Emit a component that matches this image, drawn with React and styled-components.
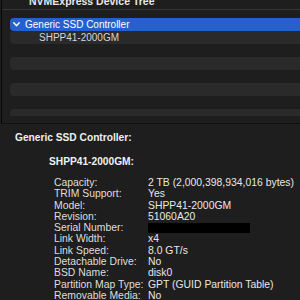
import React from "react";
import styled, { createGlobalStyle } from "styled-components";

const GlobalStyle = createGlobalStyle`
  html, body {
    margin: 0;
    padding: 0;
    background: #1e1e1e;
  }
  body {
    font-family: "Liberation Sans", Arial, sans-serif;
    -webkit-font-smoothing: antialiased;
  }
`;

const properties = [
  { label: "Capacity:", value: "2 TB (2,000,398,934,016 bytes)" },
  { label: "TRIM Support:", value: "Yes" },
  { label: "Model:", value: "SHPP41-2000GM" },
  { label: "Revision:", value: "51060A20" },
  { label: "Serial Number:", value: null },
  { label: "Link Width:", value: "x4" },
  { label: "Link Speed:", value: "8.0 GT/s" },
  { label: "Detachable Drive:", value: "No" },
  { label: "BSD Name:", value: "disk0" },
  { label: "Partition Map Type:", value: "GPT (GUID Partition Table)" },
  { label: "Removable Media:", value: "No" },
];

const Window = styled.div`
  width: 300px;
  height: 300px;
  overflow: hidden;
  background: #1e1e1e;
  display: flex;
  flex-direction: column;
`;

const TreePane = styled.div`
  height: 123px;
  margin-left: 1px;
  border-left: 1px solid #060606;
  border-bottom: 1px solid #101010;
  display: flex;
  flex-direction: column;
  flex-shrink: 0;
`;

const TitleBar = styled.div`
  height: 9px;
  overflow: hidden;
  border-bottom: 1px solid #363636;
  display: flex;
  align-items: flex-end;
  padding-left: 27px;
`;

const Title = styled.span`
  font-size: 10.5px;
  font-weight: bold;
  color: #e8e8e8;
  line-height: 13px;
  margin-bottom: 1px;
  white-space: nowrap;
`;

const RowList = styled.div`
  margin-top: 8px;
  height: 98px;
  overflow: hidden;
  display: flex;
  flex-direction: column;
  padding-left: 8px;
`;

const Row = styled.div`
  height: 13px;
  flex-shrink: 0;
  display: flex;
  align-items: center;
  gap: 5px;
  padding-left: ${({ $indent }) => $indent}px;
  border-radius: 4px 0 0 4px;
  background: ${({ $kind }) =>
    $kind === "selected" ? "#2560cf" : $kind === "stripe" ? "#2a2a2a" : "transparent"};
  color: ${({ $kind }) => ($kind === "selected" ? "#ffffff" : "#d6d6d6")};
  font-size: 10px;
  white-space: nowrap;
`;

const Chevron = () => (
  <svg width="7" height="5" viewBox="0 0 7 5">
    <path d="M0.8 0.8 L3.5 3.8 L6.2 0.8" fill="none" stroke="#ffffff" strokeWidth="1.4" strokeLinecap="round" strokeLinejoin="round" />
  </svg>
);

const DetailPane = styled.div`
  flex-shrink: 0;
  display: flex;
  flex-direction: column;
  padding: 7px 0 0 15px;
  color: #e6e6e6;
  font-size: 10.4px;
`;

const Heading = styled.div`
  font-weight: bold;
  font-size: 10.2px;
  line-height: 13px;
  height: 13px;
  color: #f0f0f0;
  margin-left: ${({ $indent }) => $indent || 0}px;
  margin-bottom: ${({ $gap }) => $gap}px;
`;

const PropList = styled.div`
  margin-left: 39px;
  display: flex;
  flex-direction: column;
  white-space: nowrap;
`;

const PropRow = styled.div`
  height: 11.3px;
  line-height: 11.3px;
  flex-shrink: 0;
  display: flex;
  align-items: center;
`;

const Label = styled.span`
  width: 94px;
  flex-shrink: 0;
  color: #dedede;
`;

const Value = styled.span`
  color: #e8e8e8;
`;

const Redacted = styled.span`
  display: block;
  width: 102px;
  height: 10px;
  background: #000;
`;

export default function App() {
  return (
    <>
      <GlobalStyle />
      <Window>
        <TreePane>
          <TitleBar>
            <Title>NVMExpress Device Tree</Title>
          </TitleBar>
          <RowList>
            <Row $kind="selected" $indent={3}>
              <Chevron />
              <span>Generic SSD Controller</span>
            </Row>
            <Row $kind="stripe" $indent={29}>SHPP41-2000GM</Row>
            <Row />
            <Row $kind="stripe" />
            <Row />
            <Row $kind="stripe" />
            <Row />
            <Row $kind="stripe" />
          </RowList>
        </TreePane>
        <DetailPane>
          <Heading $gap={11}>Generic SSD Controller:</Heading>
          <Heading $indent={34} $gap={9}>SHPP41-2000GM:</Heading>
          <PropList>
            {properties.map((p) => (
              <PropRow key={p.label}>
                <Label>{p.label}</Label>
                {p.value ? <Value>{p.value}</Value> : <Redacted />}
              </PropRow>
            ))}
          </PropList>
        </DetailPane>
      </Window>
    </>
  );
}
